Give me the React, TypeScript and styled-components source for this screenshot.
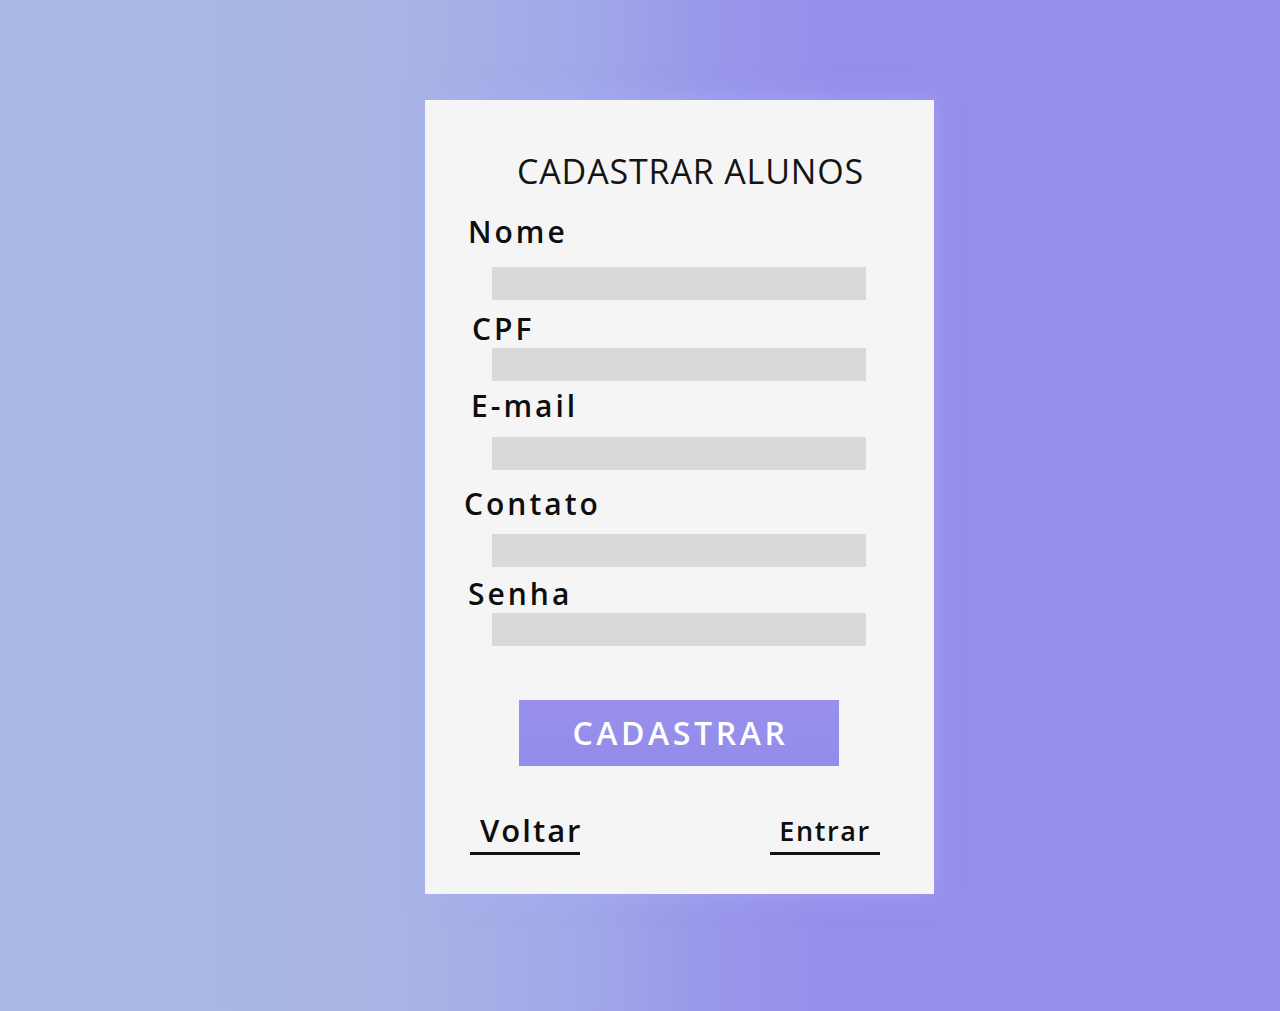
import React from "react";
import styled, { createGlobalStyle } from "styled-components";

const GlobalStyle = createGlobalStyle`
  html, body {
    margin: 0;
    padding: 0;
  }
  body {
    font-family: "Open Sans", "Liberation Sans", sans-serif;
    color: #111;
  }
  * { box-sizing: border-box; }
`;

const Page = styled.div`
  min-height: 1011px;
  width: 100%;
  display: flex;
  justify-content: center;
  align-items: flex-start;
  padding: 100px 0 0 79px;
  background: linear-gradient(
    90deg,
    #aab9e4 0%,
    #a9b6e5 30%,
    #a2a8e8 45%,
    #9a98ea 55%,
    #958feb 65%,
    #968eeb 100%
  );
`;

const Card = styled.form`
  width: 509px;
  background: #f6f5f5;
  display: flex;
  flex-direction: column;
  padding: 54px 0 39px 0;
  box-shadow: 0 0 22px rgba(170, 175, 255, 0.55);
`;

const Title = styled.h1`
  margin: 0 0 0 92px;
  font-family: "Open Sans", "Liberation Sans", sans-serif;
  font-weight: 400;
  font-size: 34px;
  line-height: 1;
  letter-spacing: 0.85px;
  color: #141414;
  white-space: nowrap;
`;

const Label = styled.label<{ $indent: number; $top: number }>`
  display: block;
  margin: ${(p) => p.$top}px 0 0 ${(p) => p.$indent}px;
  font-family: "Open Sans", "Liberation Sans", sans-serif;
  font-weight: 600;
  font-size: 30px;
  line-height: 1;
  letter-spacing: 3px;
  color: #0e0e0e;
`;

const Input = styled.input<{ $top: number }>`
  display: block;
  width: 374px;
  height: 33px;
  margin: ${(p) => p.$top}px 0 0 67px;
  padding: 0 10px;
  border: none;
  outline: none;
  background: #d9d9d9;
  font-family: "Open Sans", "Liberation Sans", sans-serif;
  font-size: 16px;
`;

const SubmitButton = styled.button`
  width: 320px;
  height: 66px;
  margin: 54px 0 0 94px;
  padding: 0 0 0 3px;
  border: none;
  background: linear-gradient(180deg, #9890ec 0%, #948cea 100%);
  color: #ffffff;
  font-family: "Open Sans", "Liberation Sans", sans-serif;
  font-weight: 600;
  font-size: 32px;
  letter-spacing: 3.6px;
  line-height: 1;
  cursor: pointer;
`;

const LinksRow = styled.div`
  display: flex;
  justify-content: space-between;
  align-items: flex-end;
  margin-top: 49px;
  padding: 0 54px 0 45px;
`;

const NavLink = styled.a<{ $size: number; $pad: number; $shift: number; $spacing: number }>`
  display: block;
  width: 110px;
  text-align: center;
  padding: 0 0 ${(p) => p.$pad}px ${(p) => p.$shift}px;
  border-bottom: 3px solid #111;
  font-family: "Open Sans", "Liberation Sans", sans-serif;
  font-weight: 600;
  font-size: ${(p) => p.$size}px;
  line-height: 1;
  letter-spacing: ${(p) => p.$spacing}px;
  color: #0e0e0e;
  text-decoration: none;
  cursor: pointer;
`;

const fields = [
  { label: "Nome", indent: 43, labelTop: 29, inputTop: 20, type: "text" },
  { label: "CPF", indent: 47, labelTop: 14, inputTop: 4, type: "text" },
  { label: "E-mail", indent: 46, labelTop: 10, inputTop: 16, type: "email" },
  { label: "Contato", indent: 39, labelTop: 19, inputTop: 15, type: "tel" },
  { label: "Senha", indent: 43, labelTop: 12, inputTop: 4, type: "password" },
];

export default function App() {
  return (
    <>
      <GlobalStyle />
      <Page>
        <Card onSubmit={(e) => e.preventDefault()}>
          <Title>CADASTRAR ALUNOS</Title>
          {fields.map((f) => (
            <React.Fragment key={f.label}>
              <Label $indent={f.indent} $top={f.labelTop}>
                {f.label}
              </Label>
              <Input $top={f.inputTop} type={f.type} aria-label={f.label} />
            </React.Fragment>
          ))}
          <SubmitButton type="submit">CADASTRAR</SubmitButton>
          <LinksRow>
            <NavLink $size={31} $pad={6} $shift={10} $spacing={2}>
              Voltar
            </NavLink>
            <NavLink $size={27} $pad={8} $shift={0} $spacing={1.6}>
              Entrar
            </NavLink>
          </LinksRow>
        </Card>
      </Page>
    </>
  );
}
